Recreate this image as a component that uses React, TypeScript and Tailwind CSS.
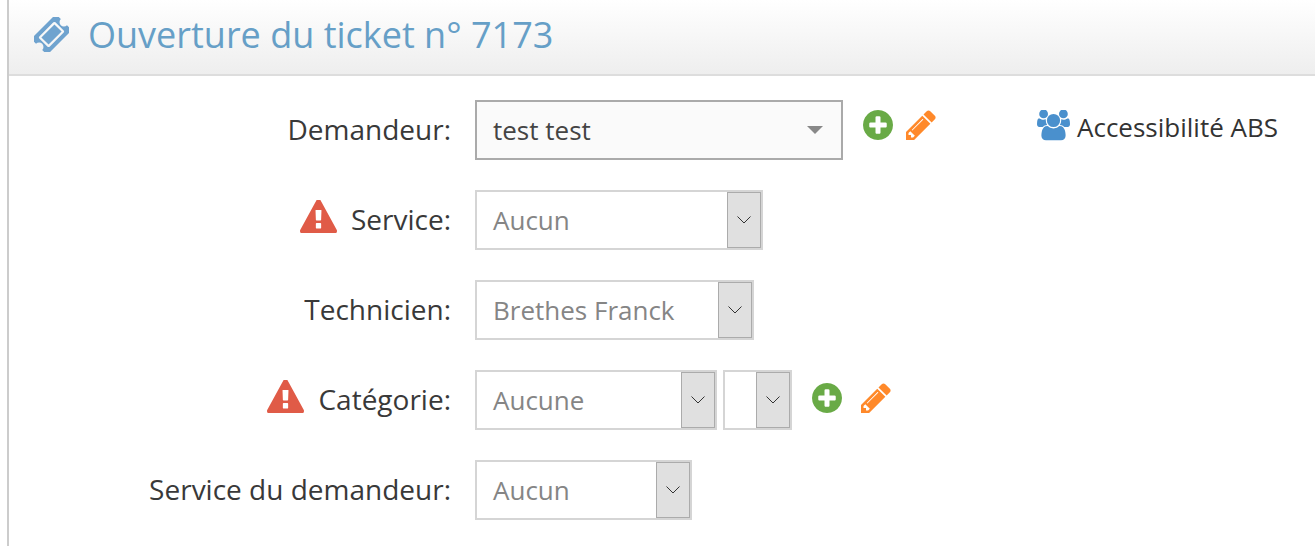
const PLUS_PATH = 'M1344 960v-128q0-26-19-45t-45-19h-256v-256q0-26-19-45t-45-19h-128q-26 0-45 19t-19 45v256h-256q-26 0-45 19t-19 45v128q0 26 19 45t45 19h256v256q0 26 19 45t45 19h128q26 0 45-19t19-45v-256h256q26 0 45-19t19-45zm320-64q0 209-103 385.5t-279.5 279.5-385.5 103-385.5-103-279.5-279.5-103-385.5 103-385.5 279.5-279.5 385.5-103 385.5 103 279.5 279.5 103 385.5z';
const PENCIL_PATH = 'M491 1536l91-91-235-235-91 91v107h128v128h107zm523-928q0-22-22-22-10 0-17 7l-542 542q-7 7-7 17 0 22 22 22 10 0 17-7l542-542q7-7 7-17zm-54-192l416 416-832 832h-416v-416zm683 96q0 53-37 90l-166 166-416-416 166-165q36-38 90-38 53 0 91 38l235 234q37 39 37 91z';
const WARNING_PATH = 'M1024 1375v-190q0-14-9.5-23.5t-22.5-9.5h-192q-13 0-22.5 9.5t-9.5 23.5v190q0 14 9.5 23.5t22.5 9.5h192q13 0 22.5-9.5t9.5-23.5zm-2-374l18-459q0-12-10-19-13-11-24-11h-220q-11 0-24 11-10 7-10 21l17 457q0 10 10 16.5t24 6.5h185q14 0 23.5-6.5t10.5-16.5zm-14-934l768 1408q35 63-2 126-17 29-46.5 46t-63.5 17h-1536q-34 0-63.5-17t-46.5-46q-37-63-2-126l768-1408q17-31 47-49t65-18 65 18 47 49z';
const TICKET_PATH = 'M1024 452l316 316-572 572-316-316zm-211 979l618-618q19-19 19-45t-19-45l-362-362q-18-18-45-18t-45 18l-618 618q-19 19-19 45t19 45l362 362q18 18 45 18t45-18zm889-637l-907 908q-37 37-90.5 37t-90.5-37l-126-126q56-56 56-136t-56-136-136-56-136 56l-125-126q-37-37-37-90.5t37-90.5l907-906q37-37 90.5-37t90.5 37l125 125q-56 56-56 136t56 136 136 56 136-56l126 125q37 37 37 90.5t-37 90.5z';
const USERS_PATH = 'M593 896q-162 5-265 128h-134q-82 0-138-40.5t-56-118.5q0-353 124-353 6 0 43.5 21t97.5 42.5 119 21.5q67 0 133-23-5 37-5 66 0 139 81 256zm1071 637q0 120-73 189.5t-194 69.5h-874q-121 0-194-69.5t-73-189.5q0-53 3.5-103.5t14-109 26.5-108.5 43-97.5 62-81 85.5-53.5 111.5-20q10 0 43 21.5t73 48 107 48 135 21.5 135-21.5 107-48 73-48 43-21.5q61 0 111.5 20t85.5 53.5 62 81 43 97.5 26.5 108.5 14 109 3.5 103.5zm-1024-1277q0 106-75 181t-181 75-181-75-75-181 75-181 181-75 181 75 75 181zm704 384q0 159-112.5 271.5t-271.5 112.5-271.5-112.5-112.5-271.5 112.5-271.5 271.5-112.5 271.5 112.5 112.5 271.5zm576 225q0 78-56 118.5t-138 40.5h-134q-103-123-265-128 81-117 81-256 0-29-5-66 66 23 133 23 59 0 119-21.5t97.5-42.5 43.5-21q124 0 124 353zm-128-609q0 106-75 181t-181 75-181-75-75-181 75-181 181-75 181 75 75 181z';

function Icon({ path, box, className }: { path: string; box: string; className: string }) {
  return (
    <svg viewBox={box} className={`shrink-0 fill-current ${className}`}>
      <path d={path} />
    </svg>
  );
}

function FakeSelect({ value, width, arrowWidth = 'w-[34px]' }: { value: string; width: string; arrowWidth?: string }) {
  return (
    <div className={`flex h-[60px] ${width} border-[2px] border-[#d5d5d5] bg-white`}>
      <span className="flex-1 min-w-0 pl-[16px] pt-[10px] text-[26px] leading-[36px] text-[#858585] whitespace-nowrap overflow-hidden">{value}</span>
      <span className={`flex items-center justify-center shrink-0 ${arrowWidth} border border-[#ababab] bg-[#e0e0e0]`}>
        <svg viewBox="0 0 14 8" className="w-[14px] h-[8px] fill-none stroke-[#333333]">
          <path d="M0.5 0.5 L7 7 L13.5 0.5" />
        </svg>
      </span>
    </div>
  );
}

function Label({ text, warning }: { text: string; warning?: boolean }) {
  return (
    <div className="w-[442px] shrink-0 flex items-center justify-end h-[60px] text-[28px] text-[#393939]">
      {warning && <Icon path={WARNING_PATH} box="0 64 1792 1536" className="w-[37px] h-[33px] mr-[14px] mb-[8px] text-[#e05b47]" />}
      <span className="relative top-[-1px]">{text}</span>
    </div>
  );
}

function Actions({ gap }: { gap: string }) {
  return (
    <div className={`flex items-center ${gap}`}>
      <Icon path={PLUS_PATH} box="128 128 1536 1536" className="w-[30px] h-[30px] text-[#69aa46]" />
      <Icon path={PENCIL_PATH} box="128 128 1536 1536" className="w-[30px] h-[30px] text-[#ff892a]" />
    </div>
  );
}

export default function App() {
  return (
    <div className="h-[546px] overflow-hidden bg-white font-['Open_Sans',sans-serif]">
      <div className="ml-[7px] h-full border-l-[2px] border-[#cccccc]">
        <div className="flex items-center h-[76px] pl-[25px] border-b-[2px] border-[#dddddd] bg-gradient-to-b from-white to-[#eeeeee]">
          <Icon path={TICKET_PATH} box="128 128 1536 1536" className="w-[35px] h-[35px] mb-[6px] text-[#6fa3cf]" />
          <h1 className="ml-[19px] text-[36px] leading-[48px] font-normal relative top-[-2px] text-[#669fc7]">Ouverture du ticket n° 7173</h1>
        </div>

        <div className="pt-[24px] flex flex-col gap-[30px]">
          <div className="flex gap-[24px]">
            <Label text="Demandeur:" />
            <div className="flex h-[60px] w-[368px] items-center border-[2px] border-[#aaaaaa] bg-[#fafafa] pl-[16px] pr-[18px] text-[26px] text-[#444444]">
              <span className="flex-1">test test</span>
              <span className="h-0 w-0 border-x-[8px] border-t-[8px] border-x-transparent border-t-[#888888]" />
            </div>
            <div className="ml-[-4px] pt-[10px]">
              <Actions gap="gap-[13px]" />
            </div>
            <div className="ml-[77px] pt-[5px] flex items-start text-[26px] leading-[44px] text-[#333333]">
              <Icon path={USERS_PATH} box="0 128 1920 1664" className="w-[33px] h-[32px] mt-[5px] mr-[7px] text-[#4a90cd]" />
              <span>Accessibilité ABS</span>
            </div>
          </div>

          <div className="flex gap-[24px]">
            <Label text="Service:" warning />
            <FakeSelect value="Aucun" width="w-[288px]" />
          </div>

          <div className="flex gap-[24px]">
            <Label text="Technicien:" />
            <FakeSelect value="Brethes Franck" width="w-[279px]" />
          </div>

          <div className="flex gap-[24px]">
            <Label text="Catégorie:" warning />
            <div className="flex">
              <FakeSelect value="Aucune" width="w-[242px]" />
              <div className="ml-[6px]">
                <FakeSelect value="" width="w-[69px]" />
              </div>
              <div className="ml-[20px] pt-[13px]">
                <Actions gap="gap-[19px]" />
              </div>
            </div>
          </div>

          <div className="flex gap-[24px]">
            <Label text="Service du demandeur:" />
            <FakeSelect value="Aucun" width="w-[217px]" />
          </div>
        </div>
      </div>
    </div>
  );
}
